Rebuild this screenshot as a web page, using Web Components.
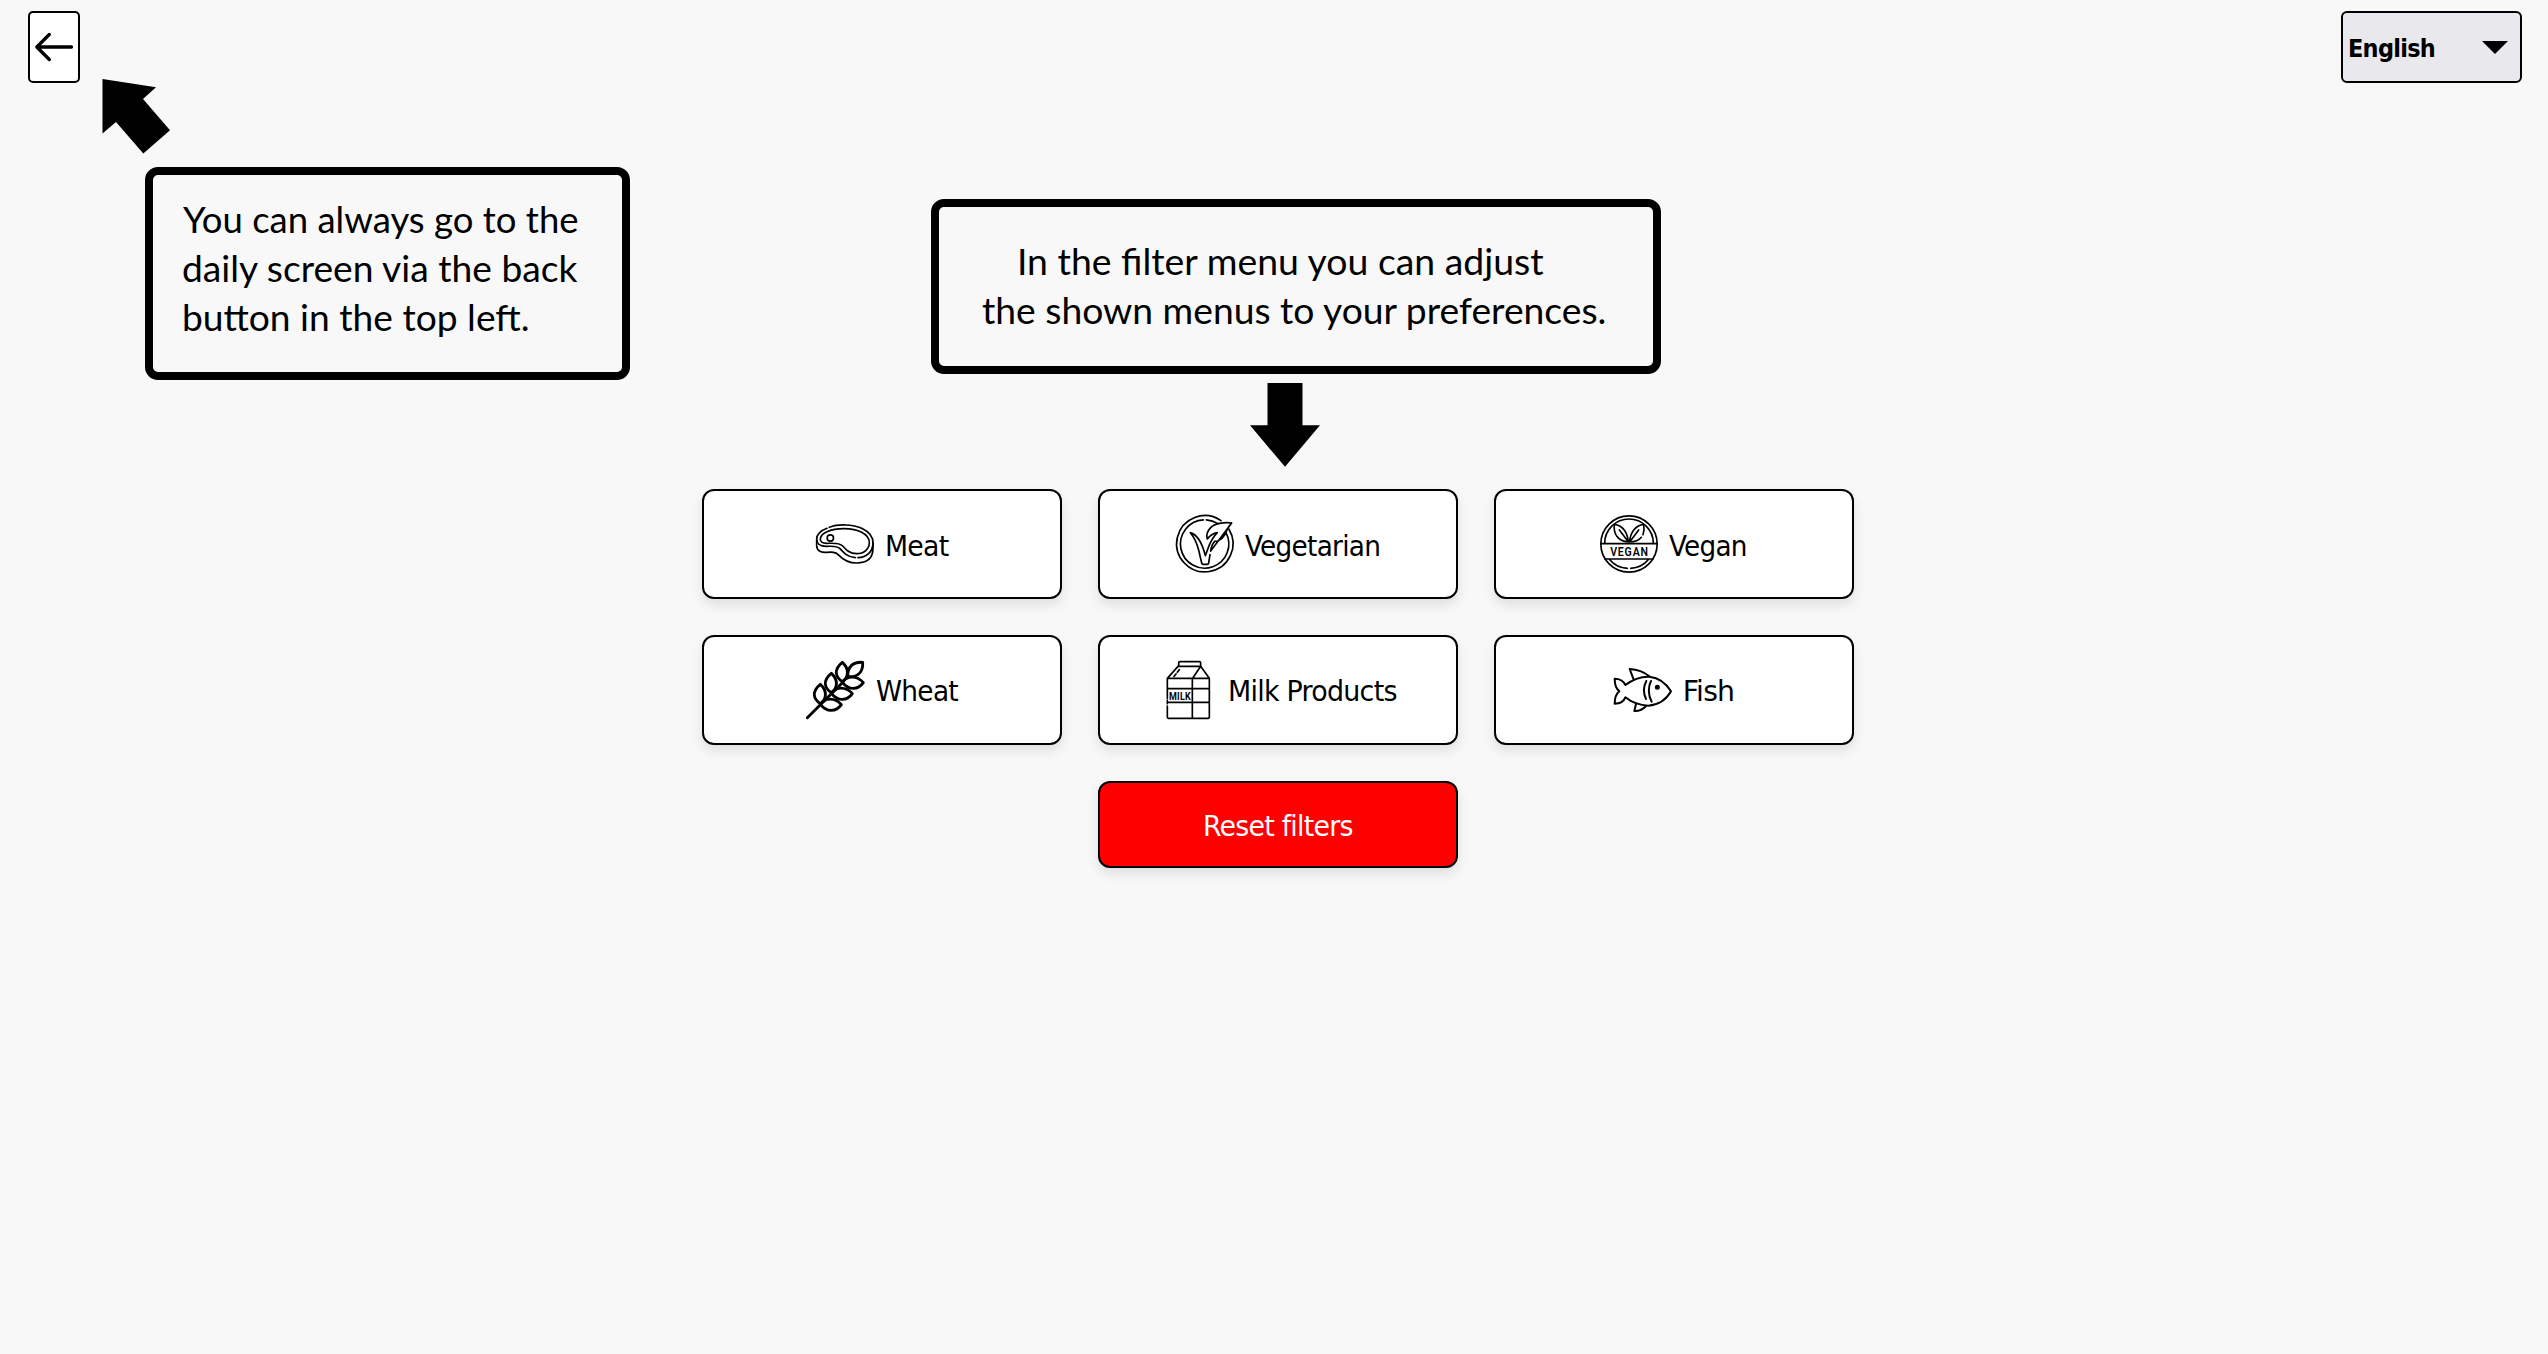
<!DOCTYPE html>
<html lang="en">
<head>
<meta charset="utf-8">
<title>Filters</title>
<style>
  html, body { margin: 0; height: 100%; background: #f8f8f8; overflow: hidden; }
</style>
</head>
<body>
<filter-page></filter-page>
<script>
const UI = '"DejaVu Sans Condensed", "DejaVu Sans", sans-serif';
const HINT = 'Lato, "Open Sans", sans-serif';

function define(name, html, setup) {
  const tpl = document.createElement('template');
  tpl.innerHTML = html;
  customElements.define(name, class extends HTMLElement {
    connectedCallback() {
      if (this.shadowRoot) return;
      this.attachShadow({ mode: 'open' }).append(tpl.content.cloneNode(true));
      if (setup) setup(this, this.shadowRoot);
    }
  });
}

/* One line of text whose inked width equals the "ink" attribute. */
define('fit-text', `
  <style>
    :host { display: block; white-space: nowrap; }
    span { display: block; width: max-content; transform-origin: 0 50%; }
  </style>
  <span><slot></slot></span>`, (host, root) => {
  const cs = getComputedStyle(host);
  const ctx = document.createElement('canvas').getContext('2d');
  ctx.font = cs.fontWeight + ' ' + cs.fontSize + ' ' + cs.fontFamily;
  const m = ctx.measureText(host.textContent);
  const spacing = (parseFloat(cs.letterSpacing) || 0) * (host.textContent.length - 1);
  const left = -m.actualBoundingBoxLeft;
  const ink = Number(host.getAttribute('ink'));
  const k = ink / (m.actualBoundingBoxRight - left + spacing);
  host.style.width = ink + 'px';
  root.querySelector('span').style.transform = 'translateX(' + (-left * k) + 'px) scaleX(' + k + ')';
});

const ICONS = {
  meat: ['378 105 174 174', 5, `
    <path d="M418 142C442 132 489 132 515 145C540 157 550 172 549 190C548 216 530 232 504 233M496 233C472 231 461 218 450 206C440 196 425 199 408 199C390 199 380 190 380 178C380 163 392 152 411 145"/>
    <path d="M391 178C391 160 420 146 462 146C505 146 538 163 538 187C538 208 522 221 500 221C478 221 467 208 458 198C448 187 425 190 410 190C398 190 391 186 391 178Z"/>
    <path d="M380 180V198C381 214 395 218 410 217C425 216 437 215 447 226C460 240 475 249 500 249C530 249 549 235 549 205V188"/>
    <circle cx="421" cy="174" r="9.5"/>`],
  vegetarian: ['272 105 174 174', 5, `
    <path d="M430.500 147A84.500 84.500 0 1 1 407 122"/>
    <path d="M422 158A72.500 72.500 0 1 1 354 119.500M363 119.500Q382 121 398 131"/>
    <path d="M439 129C415 126 387 130 374 145C365 155 362 165 366 177C375 165 385 160 396 158C386 168 376 185 370 200L360 227C352 195 340 165 315 158C325 170 335 190 340 210L349 249Q350 253 354 253H366Q369 253 370 249L374 224M376 213C378 198 382 190 388 184C410 183 420 165 425 150C428 141 433 135 439 129Z"/>`],
  vegan: ['360 105 174 174', 5, `
    <circle cx="447" cy="192" r="84.500"/>
    <path d="M374 190A73 73 0 0 1 520 190M388 238A73 73 0 0 0 442 265M452 265A73 73 0 0 0 506 238M363 191H531M375 237H519"/>
    <path d="M445 186C443 160 430 136 403 133C400 160 412 184 445 186M418 150L445 185M449 186C450 160 465 136 491 133C493 145 492 156 489 164M484 172C475 183 462 186 449 186L476 150"/>
    <text x="390.500" y="228.500" font-size="39" font-weight="600" letter-spacing="3" textLength="116" lengthAdjust="spacingAndGlyphs">VEGAN</text>`],
  wheat: ['348 108 174 174', 8.5, `
    <path d="M352 278L460 170"/>
    <g><path d="M391 236C370 222 364 200 391 178C413 198 410 222 391 236Z"/><path d="M391 238C405 217 435 217 454 239C438 262 410 262 391 238Z"/></g>
    <g transform="translate(33 -33)"><path d="M391 236C370 222 364 200 391 178C413 198 410 222 391 236Z"/><path d="M391 238C405 217 435 217 454 239C438 262 410 262 391 238Z"/></g>
    <g transform="translate(66 -66)"><path d="M391 236C370 222 364 200 391 178C413 198 410 222 391 236Z"/><path d="M391 238C405 217 435 217 454 239C438 262 410 262 391 238Z"/></g>
    <path d="M474 155C471 126 489 110 518 112C520 140 504 158 474 155Z"/>`],
  milk: ['222 108 174 174', 5, `
    <path d="M281 123V114Q281 110 285 110H343Q347 110 347 114V123M279 124H348M279 124L247 160M347 124L323 160M347 124L373 160M247 160H373M247 160V221M247 227V236M247 243V277Q247 280 250 280H370Q373 280 373 277V160M322 160V280M247 191H373M247 232H373M283 134L277 142M273 147L267 154"/>
    <text x="252" y="223.500" font-size="35" font-weight="700" letter-spacing="1" textLength="66" lengthAdjust="spacingAndGlyphs">MILK</text>`],
  fish: ['402 108 174 174', 6, `
    <path d="M436 180C460 162 485 154 508 155C542 159 560 177 573 199C560 222 540 240 505 242C480 241 455 232 436 217C432 228 420 236 404 236C404 220 407 208 418 199C408 190 404 178 404 161C420 161 432 170 436 180Z"/>
    <path d="M461 164L449 132C470 133 490 139 508 154M468 237L463 258C478 259 488 254 498 243M499 168C490 185 490 205 498 222M513 168C504 185 504 210 515 230"/>
    <circle cx="532" cy="187" r="4.500" fill="#000"/>`]
};

define('food-icon', `
  <style>
    :host { display: block; width: 58px; height: 58px; flex: none; letter-spacing: 0; }
    svg { display: block; width: 100%; height: 100%; overflow: visible; }
    text { fill: #000; stroke: none; font-family: Roboto, "Liberation Sans", sans-serif; }
  </style>
  <svg fill="none" stroke="#000" stroke-linecap="round" stroke-linejoin="round"></svg>`, (host, root) => {
  const [box, width, shapes] = ICONS[host.getAttribute('name')];
  const svg = root.querySelector('svg');
  svg.setAttribute('viewBox', box);
  svg.setAttribute('stroke-width', width);
  svg.innerHTML = shapes;
});

define('filter-button', `
  <style>
    :host { display: flex; box-sizing: border-box; width: 360px; height: 110px; align-items: center; justify-content: center;
      background: #fff; border: 2px solid #000; border-radius: 12px; box-shadow: 0 6px 12px rgba(0,0,0,.1);
      font: 28.8px/36px ${UI}; letter-spacing: -.7px; font-variant-ligatures: none; color: #000; }
    :host([reset]) { height: 87px; background: #f00; color: #fff; }
    .label { padding-top: var(--label-drop, 4px); }
    :host([reset]) .label { padding: 3px 0 0 1px; }
  </style>
  <slot name="icon"></slot><div class="label"><slot></slot></div>`);

define('back-button', `
  <style>
    :host { display: flex; box-sizing: border-box; width: 52px; height: 72px; align-items: center; justify-content: center;
      border: 2px solid #000; border-radius: 5px; background: #fff; }
    svg { display: block; }
  </style>
  <svg width="40" height="30" viewBox="34 32 40 30" fill="none" stroke="#000" stroke-width="3.300" stroke-linecap="round" stroke-linejoin="round"><path d="M37 47H71.500M49.300 34.500L36.800 47L49.300 59.500"/></svg>`);

define('language-select', `
  <style>
    :host { display: flex; box-sizing: border-box; width: 181px; height: 72px; align-items: center; justify-content: space-between;
      padding: 0 12px 0 7px; border: 2px solid #000; border-radius: 6px; background: #e9e9ed;
      font: bold 24.700px/32px ${UI}; letter-spacing: -.7px; color: #000; }
    div { padding-top: 4px; }
    svg { display: block; }
  </style>
  <div><slot></slot></div>
  <svg width="26" height="13" viewBox="0 0 26 13"><path d="M0 0H26L13 13Z"/></svg>`);

define('hint-box', `
  <style>
    :host { display: block; box-sizing: border-box; border: 8px solid #000; border-radius: 13px; font: 36px/49px ${HINT}; color: #000; }
  </style>
  <slot></slot>`);

define('filter-page', `
  <style>
    :host { display: flex; flex-direction: column; height: 100%; background: #f8f8f8; }
    header { display: flex; justify-content: space-between; padding: 11px 26px 0 28px; }
    .hints { display: flex; align-items: flex-start; height: 410px; margin-top: -4px; padding-left: 102px; }
    .hints svg { display: block; }
    .back { width: 829px; }
    .back hint-box { width: 485px; height: 213px; margin: 12px 0 0 43px; padding: 20px 0 0 30px; }
    .menu { padding-top: 120px; }
    .menu hint-box { width: 730px; height: 175px; padding: 30px 0 0 43px; }
    .menu svg { margin: 9px 0 0 319px; }
    .first { margin-left: 38px; }
    .last { margin-left: 1px; }
    main { display: flex; flex-direction: column; align-items: center; gap: 36px; padding-left: 8px; }
    .row { display: flex; gap: 36px; }
    .row + .row { --label-drop: 2px; }
  </style>
  <header>
    <back-button></back-button>
    <language-select><fit-text ink="85">English</fit-text></language-select>
  </header>
  <section class="hints">
    <div class="back">
      <svg width="68" height="76" viewBox="102 79 68 76"><path d="M102.500 79L156 87.300L143 99L170 130.300L143.300 153.500L116 122L102.500 133.500Z"/></svg>
      <hint-box>
        <fit-text ink="394.500">You can always go to the</fit-text>
        <fit-text ink="397">daily screen via the back</fit-text>
        <fit-text class="last" ink="344">button in the top left.</fit-text>
      </hint-box>
    </div>
    <div class="menu">
      <hint-box>
        <fit-text class="first" ink="525.500">In the filter menu you can adjust</fit-text>
        <fit-text ink="624.500">the shown menus to your preferences.</fit-text>
      </hint-box>
      <svg width="70" height="84" viewBox="1250 383 70 84"><path d="M1267.500 383H1302.500V425.300H1320L1285 466.800L1250 425.300H1267.500Z"/></svg>
    </div>
  </section>
  <main>
    <div class="row">
      <filter-button><food-icon slot="icon" name="meat"></food-icon><fit-text style="margin-left:13px" ink="62">Meat</fit-text></filter-button>
      <filter-button><food-icon slot="icon" name="vegetarian"></food-icon><fit-text style="margin-left:11px" ink="134.500">Vegetarian</fit-text></filter-button>
      <filter-button><food-icon slot="icon" name="vegan"></food-icon><fit-text style="margin:0 2px 0 11px" ink="77">Vegan</fit-text></filter-button>
    </div>
    <div class="row">
      <filter-button><food-icon slot="icon" name="wheat"></food-icon><fit-text style="margin-left:12px" ink="82.500">Wheat</fit-text></filter-button>
      <filter-button><food-icon slot="icon" name="milk"></food-icon><fit-text style="margin-left:13px" ink="167">Milk Products</fit-text></filter-button>
      <filter-button><food-icon slot="icon" name="fish"></food-icon><fit-text style="margin-left:13px" ink="48.500">Fish</fit-text></filter-button>
    </div>
    <filter-button reset><fit-text ink="148">Reset filters</fit-text></filter-button>
  </main>`);
</script>
</body>
</html>
